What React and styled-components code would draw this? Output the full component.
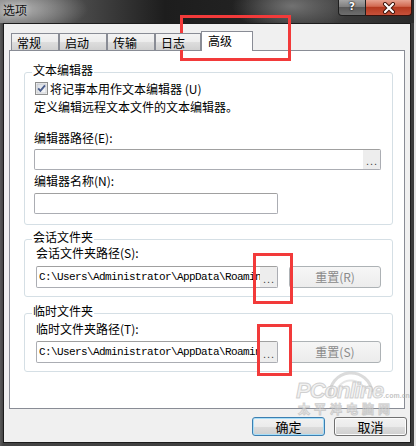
import React from "react";
import styled, { createGlobalStyle } from "styled-components";

const GlobalStyle = createGlobalStyle`
  html, body { margin: 0; padding: 0; background: #e2e2e2; }
  body {
    width: 416px; height: 446px; overflow: hidden;
    font-family: "Noto Sans CJK SC", "Microsoft YaHei", sans-serif;
    font-size: 12px; color: #000;
  }
  * { box-sizing: border-box; }
`;

const Stage = styled.div`
  position: relative;
  width: 416px;
  height: 446px;
`;

const Window = styled.div`
  width: 414px;
  height: 446px;
  display: flex;
  flex-direction: column;
  background: linear-gradient(90deg, #5a5a5a 0, #444 3px, #3a3a3a 100%);
`;

const TitleBar = styled.div`
  height: 23px;
  flex: none;
  display: flex;
  align-items: flex-start;
  background:
    radial-gradient(ellipse 70px 24px at 18px 9px, rgba(190,190,190,0.85), rgba(190,190,190,0) 100%),
    radial-gradient(ellipse 60px 26px at 292px 6px, rgba(130,130,130,0.8), rgba(130,130,130,0) 100%),
    linear-gradient(90deg, #707070 0, #454545 90px, #1d1d1d 165px, #222 240px, #3c3c3c 330px, #2a2a2a 100%);
`;

const Title = styled.div`
  padding: 3px 0 0 3px;
  font-size: 12px;
  line-height: 14px;
  color: #111;
  text-shadow: 0 0 6px rgba(255,255,255,0.8);
  flex: 1;
`;

const CaptionButtons = styled.div`
  display: flex;
  margin-right: 2px;
`;

const HelpButton = styled.div`
  width: 28px;
  height: 16px;
  border: 1px solid #1e1e1e;
  border-top: none;
  border-radius: 0 0 0 4px;
  background: linear-gradient(#a5a5a5 0%, #808080 45%, #5a5a5a 50%, #6e6e6e 100%);
  color: #fff;
  font-family: "DejaVu Sans", sans-serif;
  font-weight: bold;
  font-size: 11px;
  line-height: 14px;
  text-align: center;
  text-shadow: 0 0 2px #000, 0 0 1px #000;
`;

const CloseButton = styled.div`
  width: 46px;
  height: 16px;
  border: 1px solid #3a120c;
  border-left: none;
  border-top: none;
  border-radius: 0 0 4px 0;
  background: linear-gradient(#e7a290 0%, #d26a52 42%, #b53a20 50%, #c7513a 100%);
  display: flex;
  align-items: center;
  justify-content: center;
`;

const Client = styled.div`
  flex: 1;
  margin: 0 3px 3px 3px;
  background: #f0f0f0;
  border: 1px solid #1c1c1c;
  display: flex;
  flex-direction: column;
`;

const TabsArea = styled.div`
  margin: 7px 5px 0 5px;
  display: flex;
  flex-direction: column;
`;

const TabStrip = styled.div`
  display: flex;
  align-items: flex-end;
  padding-left: 2px;
`;

const Tab = styled.div`
  width: ${(p) => p.$w}px;
  height: ${(p) => (p.$active ? 20 : 17)}px;
  margin-bottom: ${(p) => (p.$active ? -1 : 0)}px;
  border: 1px solid #898c95;
  border-bottom: none;
  background: ${(p) =>
    p.$active ? "#fff" : "linear-gradient(#f3f3f3 0%, #ececec 50%, #dedede 50%, #d0d0d0 100%)"};
  padding: 2px 0 0 ${(p) => (p.$active ? 6 : 5)}px;
  font-size: 12px;
  line-height: 14px;
  position: relative;
  z-index: ${(p) => (p.$active ? 2 : 1)};
`;

const Panel = styled.div`
  height: 359px;
  background: #fff;
  border: 1px solid #898c95;
  padding: 13px 11px 0 14px;
  display: flex;
  flex-direction: column;
`;

const Group = styled.fieldset`
  margin: ${(p) => p.$mt || 0}px 0 0 0;
  padding: 0 8px ${(p) => p.$pb}px 8px;
  border: 1px solid #d5dfe5;
  border-radius: 3px;
  min-width: 0;
`;

const Legend = styled.legend`
  margin-left: -1px;
  padding: 0 1px 4px 1px;
  font-size: 12px;
  line-height: 12px;
  height: 16px;
`;

const GroupBody = styled.div`
  padding-left: ${(p) => p.$pl}px;
  display: flex;
  flex-direction: column;
  align-items: flex-start;
`;

const CheckRow = styled.label`
  margin-top: 2px;
  height: 13px;
  display: flex;
  align-items: center;
  gap: 2px;
  line-height: 13px;
`;

const CheckBox = styled.span`
  width: 13px;
  height: 13px;
  margin-left: 1px;
  display: block;
  flex: none;
`;

const TextLine = styled.div`
  margin-top: ${(p) => p.$mt}px;
  line-height: 14px;
  height: 14px;
  white-space: nowrap;
`;

const TextBox = styled.div`
  margin-top: ${(p) => p.$mt}px;
  width: ${(p) => p.$w}px;
  height: ${(p) => p.$h}px;
  border: 1px solid #abadb3;
  border-top-color: #a0a0a0;
  border-radius: 2px;
  background: #fff;
  display: flex;
  overflow: hidden;
`;

const PathText = styled.div`
  flex: 1;
  min-width: 0;
  overflow: hidden;
  white-space: nowrap;
  padding-left: 2px;
  font-family: "Liberation Mono", "DejaVu Sans Mono", monospace;
  font-size: 11px;
  letter-spacing: -0.6px;
  line-height: 20px;
  color: #000;
`;

const BrowseButton = styled.div`
  width: 17px;
  flex: none;
  background: #ededed;
  color: #444;
  font-family: "Liberation Sans", sans-serif;
  font-size: 11px;
  letter-spacing: 1px;
  text-align: center;
  line-height: ${(p) => p.$lh}px;
  padding-left: 1px;
`;

const PathRow = styled.div`
  margin-top: ${(p) => p.$mt}px;
  display: flex;
  gap: 11px;
`;

const ResetButton = styled.div`
  width: 92px;
  height: 22px;
  border: 1px solid #adb2b5;
  border-radius: 3px;
  background: linear-gradient(#f6f6f6, #ececec);
  color: #8a8a8a;
  text-align: center;
  line-height: 20px;
  font-size: 12px;
`;

const ButtonRow = styled.div`
  margin-top: 8px;
  padding-right: 3px;
  display: flex;
  justify-content: flex-end;
  gap: 9px;
`;

const DialogButton = styled.div`
  width: 73px;
  height: 19px;
  border: 1px solid ${(p) => (p.$default ? "#3c7fb1" : "#707070")};
  border-radius: 3px;
  background: linear-gradient(#f2f2f2 0%, #ebebeb 50%, #dddddd 50%, #cfcfcf 100%);
  box-shadow: ${(p) => (p.$default ? "inset 0 0 0 1px #a8def8" : "inset 0 0 0 1px #fcfcfc")};
  text-align: center;
  font-size: 13px;
  line-height: 17px;
`;

const Annotation = styled.div`
  position: absolute;
  left: ${(p) => p.$x}px;
  top: ${(p) => p.$y}px;
  width: ${(p) => p.$w}px;
  height: ${(p) => p.$h}px;
  border: 3px solid #f23a3a;
  pointer-events: none;
`;

const Watermark = styled.div`
  position: absolute;
  left: 290px;
  top: 370px;
  width: 112px;
  height: 48px;
  pointer-events: none;
`;

const WmLogo = styled.div`
  position: absolute;
  left: 6px;
  top: 8px;
  font-family: "Liberation Sans", sans-serif;
  font-weight: bold;
  font-style: italic;
  font-size: 22px;
  letter-spacing: -1px;
  color: rgba(235,235,235,0.7);
  -webkit-text-stroke: 1px rgba(175,175,175,0.55);
`;

const WmDomain = styled.span`
  font-size: 7px;
  letter-spacing: 0;
  -webkit-text-stroke: 0;
  color: rgba(170,170,170,0.7);
  font-style: normal;
`;

const WmName = styled.div`
  position: absolute;
  left: 8px;
  top: 33px;
  font-size: 12px;
  line-height: 12px;
  letter-spacing: 4px;
  font-weight: bold;
  color: rgba(235,235,235,0.6);
  -webkit-text-stroke: 1px rgba(170,170,170,0.5);
`;

const WmArc = styled.svg`
  position: absolute;
  left: 36px;
  top: 0;
`;

function Check() {
  return (
    <svg width="13" height="13" viewBox="0 0 13 13">
      <defs>
        <linearGradient id="cbg" x1="0" y1="0" x2="1" y2="1">
          <stop offset="0" stopColor="#d8dce2" />
          <stop offset="1" stopColor="#fafbfc" />
        </linearGradient>
      </defs>
      <rect x="0.5" y="0.5" width="12" height="12" fill="#f4f4f4" stroke="#8e8f8f" />
      <rect x="2" y="2" width="9" height="9" fill="url(#cbg)" stroke="#b6b9bf" strokeWidth="0.6" />
      <path d="M3.2 6.4 L5.4 8.8 L10 3.4" fill="none" stroke="#4a5d8c" strokeWidth="1.9" />
    </svg>
  );
}

function CloseX() {
  return (
    <svg width="14" height="12" viewBox="0 0 14 12">
      <path d="M3 2 L11 10 M11 2 L3 10" stroke="#3b1108" strokeWidth="4" strokeLinecap="round" />
      <path d="M3 2 L11 10 M11 2 L3 10" stroke="#fff" strokeWidth="2.2" strokeLinecap="round" />
    </svg>
  );
}

const tabs = [
  { label: "常规", w: 48 },
  { label: "启动", w: 48 },
  { label: "传输", w: 48 },
  { label: "日志", w: 46 },
  { label: "高级", w: 52, active: true },
];

const longPath = "C:\\Users\\Administrator\\AppData\\Roaming\\NetSarang\\Xshell\\Sessions";
const tempPath = "C:\\Users\\Administrator\\AppData\\Roaming\\NetSarang\\Xshell\\Temp";

export default function App() {
  return (
    <Stage>
      <GlobalStyle />
      <Window>
        <TitleBar>
          <Title>选项</Title>
          <CaptionButtons>
            <HelpButton>?</HelpButton>
            <CloseButton>
              <CloseX />
            </CloseButton>
          </CaptionButtons>
        </TitleBar>
        <Client>
          <TabsArea>
            <TabStrip>
              {tabs.map((t) => (
                <Tab key={t.label} $w={t.w} $active={t.active}>
                  {t.label}
                </Tab>
              ))}
            </TabStrip>
            <Panel>
              <Group $pb={10}>
                <Legend>文本编辑器</Legend>
                <GroupBody $pl={1}>
                  <CheckRow>
                    <CheckBox>
                      <Check />
                    </CheckBox>
                    将记事本用作文本编辑器 (U)
                  </CheckRow>
                  <TextLine $mt={5}>定义编辑远程文本文件的文本编辑器。</TextLine>
                  <TextLine $mt={17}>编辑器路径(E):</TextLine>
                  <TextBox $mt={4} $w={347} $h={21}>
                    <PathText />
                    <BrowseButton $lh={22}>...</BrowseButton>
                  </TextBox>
                  <TextLine $mt={4}>编辑器名称(N):</TextLine>
                  <TextBox $mt={5} $w={244} $h={21} />
                </GroupBody>
              </Group>

              <Group $mt={6} $pb={8}>
                <Legend>会话文件夹</Legend>
                <GroupBody $pl={3}>
                  <TextLine $mt={-1}>会话文件夹路径(S):</TextLine>
                  <PathRow $mt={6}>
                    <TextBox $mt={0} $w={242} $h={22}>
                      <PathText>{longPath}</PathText>
                      <BrowseButton $lh={24}>...</BrowseButton>
                    </TextBox>
                    <ResetButton>重置(R)</ResetButton>
                  </PathRow>
                </GroupBody>
              </Group>

              <Group $mt={8} $pb={8}>
                <Legend>临时文件夹</Legend>
                <GroupBody $pl={3}>
                  <TextLine $mt={1}>临时文件夹路径(T):</TextLine>
                  <PathRow $mt={5}>
                    <TextBox $mt={0} $w={242} $h={22}>
                      <PathText>{tempPath}</PathText>
                      <BrowseButton $lh={24}>...</BrowseButton>
                    </TextBox>
                    <ResetButton>重置(S)</ResetButton>
                  </PathRow>
                </GroupBody>
              </Group>
            </Panel>
          </TabsArea>
          <ButtonRow>
            <DialogButton $default>确定</DialogButton>
            <DialogButton>取消</DialogButton>
          </ButtonRow>
        </Client>
      </Window>

      <Watermark>
        <WmArc width="50" height="30" viewBox="0 0 50 30">
          <path d="M4 26 A21 21 0 0 1 46 22" fill="none" stroke="rgba(190,190,190,0.55)" strokeWidth="3" />
          <path d="M10 27 A15 15 0 0 1 40 24" fill="none" stroke="rgba(200,200,200,0.45)" strokeWidth="2" />
        </WmArc>
        <WmLogo>
          PConline<WmDomain>.com.cn</WmDomain>
        </WmLogo>
        <WmName>太平洋电脑网</WmName>
      </Watermark>

      <Annotation $x={180} $y={15} $w={111} $h={46} />
      <Annotation $x={253} $y={253} $w={40} $h={51} />
      <Annotation $x={257} $y={324} $w={35} $h={52} />
    </Stage>
  );
}
